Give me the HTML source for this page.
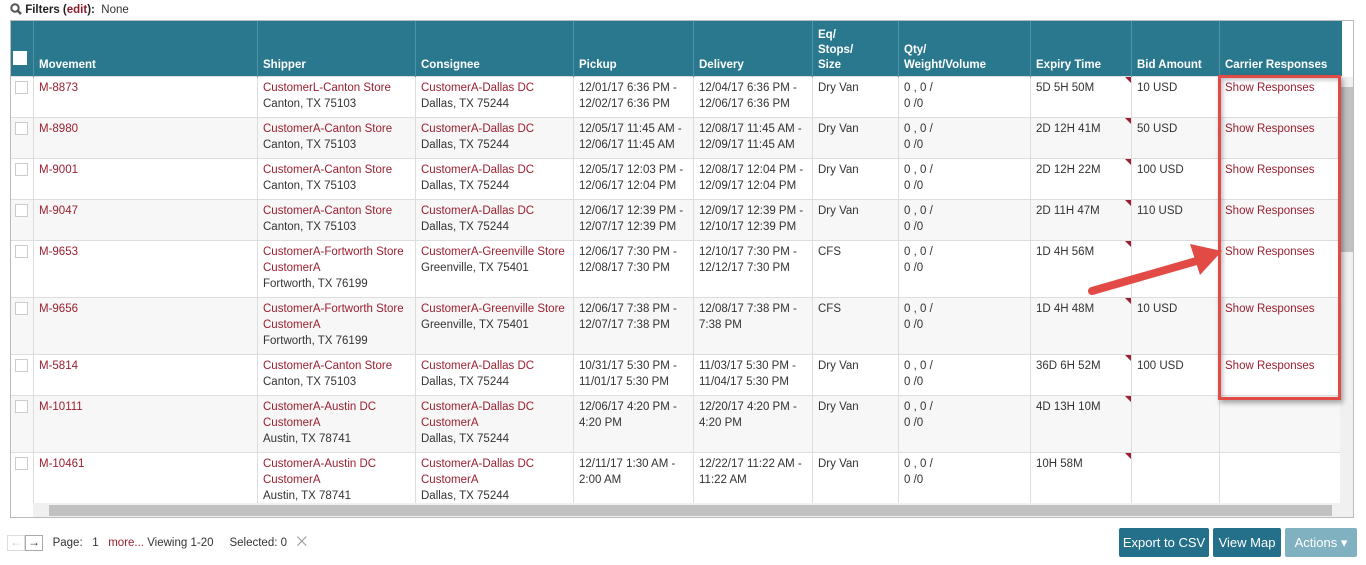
<!DOCTYPE html>
<html><head><meta charset="utf-8"><style>
*{box-sizing:border-box;margin:0;padding:0}
body{width:1366px;height:565px;background:#fff;font-family:"Liberation Sans",Arial,sans-serif;font-size:11.5px;color:#333;position:relative;overflow:hidden}
.filters{position:absolute;left:10px;top:3px;font-size:11.5px}
.filters b{color:#222}.filters b span{color:#8c1c2c}
.wrap{position:absolute;left:10px;top:20px;width:1344px;height:498px;border:1px solid #bbb;overflow:hidden}
table{border-collapse:collapse;table-layout:fixed;position:absolute;left:-1px;top:-1px}
th{background:#2a788d;color:#fff;font-weight:bold;text-align:left;vertical-align:bottom;padding:0 5px 3px;height:56px;border-left:1px solid #4d93a5;line-height:15px;font-size:11.5px}
td{vertical-align:top;padding:3px 5px 0;line-height:16px;border-left:1px solid #ddd;border-top:1px solid #ddd;position:relative}
tr.g td{background:#f7f7f7}
a{color:#9b1f30;text-decoration:none}
.cb{width:13px;height:13px;border:1px solid #ccc;background:#fff;display:inline-block;margin-top:1px}
th .cb{width:14px;height:14px;border:none}
.tri{position:absolute;right:0;top:0;width:0;height:0;border-top:6px solid #9b1f30;border-left:6px solid transparent}
.vs{position:absolute;left:1329px;top:56px;width:14px;height:426px;background:#f0f0f0}
.vs .t{position:absolute;left:1px;top:10px;width:12px;height:165px;background:#c1c1c1}
.hs{position:absolute;left:22px;top:482px;width:1321px;height:15px;background:#f0f0f0}
.hs .t{position:absolute;left:16px;top:2px;width:1283px;height:11px;background:#c1c1c1}
.box{position:absolute;left:1218px;top:75px;width:123px;height:325px;border:3px solid #e24a45;box-shadow:2px 3px 5px rgba(0,0,0,.35),inset 2px 2px 4px rgba(0,0,0,.25)}
.pager{position:absolute;left:7px;top:534px;font-size:11.5px;color:#333}
.ab{display:inline-block;width:18px;height:16px;border:1px solid #aaa;text-align:center;line-height:13px;vertical-align:middle;font-size:12px}
.btn{position:absolute;top:528px;height:29px;background:#24708a;color:#fff;font-size:13px;line-height:29px;text-align:center;border-radius:2px}
</style></head><body>
<div class="filters"><svg width="12" height="12" style="vertical-align:-2px"><circle cx="5" cy="5" r="3.7" fill="none" stroke="#555" stroke-width="2"/><line x1="8" y1="8" x2="11" y2="11" stroke="#555" stroke-width="2.5"/></svg> <b>Filters (<span>edit</span>):</b>&nbsp; None</div>
<div class="wrap">
<table>
<colgroup><col style="width:22px"><col style="width:224px"><col style="width:158px"><col style="width:158px"><col style="width:120px"><col style="width:119px"><col style="width:86px"><col style="width:132px"><col style="width:101px"><col style="width:88px"><col style="width:122px"></colgroup>
<tr><th style="padding:0 3px 6px;border-left:none"><span class="cb"></span></th><th>Movement</th><th>Shipper</th><th>Consignee</th><th>Pickup</th><th>Delivery</th><th>Eq/<br>Stops/<br>Size</th><th>Qty/<br>Weight/Volume</th><th>Expiry Time</th><th>Bid Amount</th><th>Carrier Responses</th></tr>
<tr style="height:41px"><td style="border-left:none"><span class="cb"></span></td><td><a>M-8873</a></td><td><a>CustomerL-Canton Store</a><br>Canton, TX 75103</td><td><a>CustomerA-Dallas DC</a><br>Dallas, TX 75244</td><td>12/01/17 6:36 PM -<br>12/02/17 6:36 PM</td><td>12/04/17 6:36 PM -<br>12/06/17 6:36 PM</td><td>Dry Van</td><td>0 , 0 /<br>0 /0</td><td>5D 5H 50M<i class="tri"></i></td><td>10 USD</td><td><a>Show Responses</a></td></tr>
<tr class="g" style="height:41px"><td style="border-left:none"><span class="cb"></span></td><td><a>M-8980</a></td><td><a>CustomerA-Canton Store</a><br>Canton, TX 75103</td><td><a>CustomerA-Dallas DC</a><br>Dallas, TX 75244</td><td>12/05/17 11:45 AM -<br>12/06/17 11:45 AM</td><td>12/08/17 11:45 AM -<br>12/09/17 11:45 AM</td><td>Dry Van</td><td>0 , 0 /<br>0 /0</td><td>2D 12H 41M<i class="tri"></i></td><td>50 USD</td><td><a>Show Responses</a></td></tr>
<tr style="height:41px"><td style="border-left:none"><span class="cb"></span></td><td><a>M-9001</a></td><td><a>CustomerA-Canton Store</a><br>Canton, TX 75103</td><td><a>CustomerA-Dallas DC</a><br>Dallas, TX 75244</td><td>12/05/17 12:03 PM -<br>12/06/17 12:04 PM</td><td>12/08/17 12:04 PM -<br>12/09/17 12:04 PM</td><td>Dry Van</td><td>0 , 0 /<br>0 /0</td><td>2D 12H 22M<i class="tri"></i></td><td>100 USD</td><td><a>Show Responses</a></td></tr>
<tr class="g" style="height:41px"><td style="border-left:none"><span class="cb"></span></td><td><a>M-9047</a></td><td><a>CustomerA-Canton Store</a><br>Canton, TX 75103</td><td><a>CustomerA-Dallas DC</a><br>Dallas, TX 75244</td><td>12/06/17 12:39 PM -<br>12/07/17 12:39 PM</td><td>12/09/17 12:39 PM -<br>12/10/17 12:39 PM</td><td>Dry Van</td><td>0 , 0 /<br>0 /0</td><td>2D 11H 47M<i class="tri"></i></td><td>110 USD</td><td><a>Show Responses</a></td></tr>
<tr style="height:57px"><td style="border-left:none"><span class="cb"></span></td><td><a>M-9653</a></td><td><a>CustomerA-Fortworth Store</a><br><a>CustomerA</a><br>Fortworth, TX 76199</td><td><a>CustomerA-Greenville Store</a><br>Greenville, TX 75401</td><td>12/06/17 7:30 PM -<br>12/08/17 7:30 PM</td><td>12/10/17 7:30 PM -<br>12/12/17 7:30 PM</td><td>CFS</td><td>0 , 0 /<br>0 /0</td><td>1D 4H 56M<i class="tri"></i></td><td></td><td><a>Show Responses</a></td></tr>
<tr class="g" style="height:57px"><td style="border-left:none"><span class="cb"></span></td><td><a>M-9656</a></td><td><a>CustomerA-Fortworth Store</a><br><a>CustomerA</a><br>Fortworth, TX 76199</td><td><a>CustomerA-Greenville Store</a><br>Greenville, TX 75401</td><td>12/06/17 7:38 PM -<br>12/07/17 7:38 PM</td><td>12/08/17 7:38 PM -<br>7:38 PM</td><td>CFS</td><td>0 , 0 /<br>0 /0</td><td>1D 4H 48M<i class="tri"></i></td><td>10 USD</td><td><a>Show Responses</a></td></tr>
<tr style="height:41px"><td style="border-left:none"><span class="cb"></span></td><td><a>M-5814</a></td><td><a>CustomerA-Canton Store</a><br>Canton, TX 75103</td><td><a>CustomerA-Dallas DC</a><br>Dallas, TX 75244</td><td>10/31/17 5:30 PM -<br>11/01/17 5:30 PM</td><td>11/03/17 5:30 PM -<br>11/04/17 5:30 PM</td><td>Dry Van</td><td>0 , 0 /<br>0 /0</td><td>36D 6H 52M<i class="tri"></i></td><td>100 USD</td><td><a>Show Responses</a></td></tr>
<tr class="g" style="height:57px"><td style="border-left:none"><span class="cb"></span></td><td><a>M-10111</a></td><td><a>CustomerA-Austin DC</a><br><a>CustomerA</a><br>Austin, TX 78741</td><td><a>CustomerA-Dallas DC</a><br><a>CustomerA</a><br>Dallas, TX 75244</td><td>12/06/17 4:20 PM -<br>4:20 PM</td><td>12/20/17 4:20 PM -<br>4:20 PM</td><td>Dry Van</td><td>0 , 0 /<br>0 /0</td><td>4D 13H 10M<i class="tri"></i></td><td></td><td></td></tr>
<tr style="height:57px"><td style="border-left:none"><span class="cb"></span></td><td><a>M-10461</a></td><td><a>CustomerA-Austin DC</a><br><a>CustomerA</a><br>Austin, TX 78741</td><td><a>CustomerA-Dallas DC</a><br><a>CustomerA</a><br>Dallas, TX 75244</td><td>12/11/17 1:30 AM -<br>2:00 AM</td><td>12/22/17 11:22 AM -<br>11:22 AM</td><td>Dry Van</td><td>0 , 0 /<br>0 /0</td><td>10H 58M<i class="tri"></i></td><td></td><td></td></tr>
</table>
<div class="vs"><div class="t"></div></div>
<div class="hs"><div class="t"></div></div>
</div>
<div class="box"></div>
<svg style="position:absolute;left:0;top:0" width="1366" height="565"><line x1="1092" y1="291" x2="1200" y2="260" stroke="#e24a45" stroke-width="8" stroke-linecap="round"/><polygon points="1222,251 1190,244 1200,275" fill="#e24a45"/></svg>
<div class="pager"><span class="ab" style="color:#ccc;border-color:#ddd">&#8592;</span><span class="ab">&#8594;</span>&nbsp;&nbsp; Page:&nbsp;&nbsp; 1&nbsp;&nbsp; <a>more...</a> Viewing 1-20&nbsp;&nbsp;&nbsp;&nbsp; Selected: 0&nbsp;&nbsp; <span style="color:#999;font-size:13px">&#10761;</span></div>
<div class="btn" style="left:1119px;width:90px">Export to CSV</div>
<div class="btn" style="left:1213px;width:68px">View Map</div>
<div class="btn" style="left:1285px;width:72px;background:#7fb1c0">Actions &#9662;</div>
</body></html>
